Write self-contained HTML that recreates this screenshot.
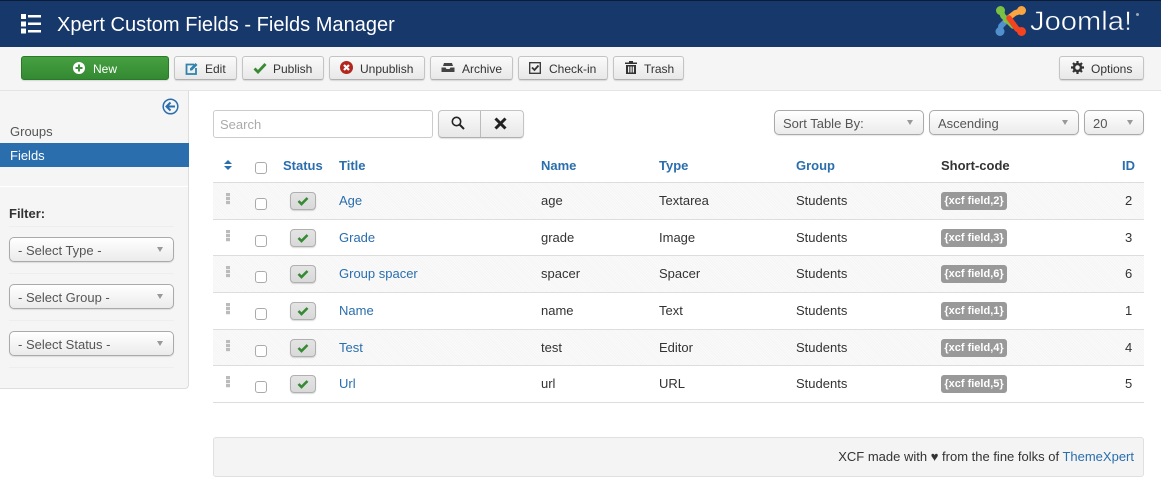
<!DOCTYPE html>
<html><head><meta charset="utf-8"><style>
html,body{margin:0;padding:0;background:#fff}
#p{position:relative;width:1161px;height:500px;overflow:hidden;background:#fff;font:13px/18px "Liberation Sans",sans-serif;color:#333}
#p div,#p span.a,#p a,#p svg{position:absolute}
a{color:#2a6ead;text-decoration:none}
.btn{box-sizing:border-box;top:56px;height:24px;border:1px solid #c4c4c4;border-bottom-color:#b0b0b0;border-radius:3px;background:linear-gradient(#fafafa,#e8e8e8);box-shadow:0 1px 1px rgba(0,0,0,.12);font-size:12px;line-height:24px;color:#333;white-space:nowrap}
.btn span{position:absolute;top:0}
.sel{box-sizing:border-box;height:25px;border:1px solid #aaa;border-radius:5px;background:linear-gradient(#fff,#f6f6f6 45%,#ebebeb);box-shadow:0 1px 1px rgba(0,0,0,.1);color:#555;line-height:24px;white-space:nowrap}
.sel span{position:absolute;left:8px;top:1px}
.sel i{position:absolute;right:10px;top:9px;width:0;height:0;border:3px solid transparent;border-top:5px solid #999;border-bottom:0}
.hl{background:#eee;height:1px;left:9px;width:165px}
.row{left:213px;width:931px;height:36px;border-bottom:1px solid #ddd;box-sizing:content-box}
.odd{background:#f7f7f7 repeating-linear-gradient(45deg,#f5f5f5 0 1px,#fafafa 1px 2px)}
.c{position:absolute;top:9px;white-space:nowrap}
.th{position:absolute;top:157px;font-weight:bold;color:#2a6ead;white-space:nowrap}
.cb{box-sizing:border-box;width:12px;height:12px;border:1px solid #aaa;border-radius:3px;background:#fff;left:42px}
.st{box-sizing:border-box;left:77px;top:9px;width:26px;height:18px;border:1px solid #b0b0b0;border-radius:4px;background:linear-gradient(#e4e4e4,#d9d9d9);box-shadow:0 1px 1px rgba(0,0,0,.15)}
.lab{left:728px;top:9px;height:18px;width:66px;border-radius:3px;background:#999;color:#fff;font-size:11px;font-weight:bold;line-height:18px;text-align:center;white-space:nowrap}
.dr{left:13px;top:10px;width:4px;height:12px;background:repeating-linear-gradient(#bbb 0 3px,#eee 3px 4px)}
</style></head><body><div id="p">

<div style="left:0;top:0;width:1161px;height:47px;background:#17386a;border-top:1px solid #0c1c36;box-sizing:border-box"></div>
<svg style="left:20px;top:13px" width="22" height="21" viewBox="0 0 22 21"><path fill="#fff" d="M1 1h5v5H1zM8 2h13v2.500H8zM1 8.500h5v5H1zM8 9.500h13V12H8zM1 15.500h5v5H1zM8 17h13v2.500H8z"/></svg>
<div style="left:57px;top:12px;font-size:20px;line-height:26px;color:#fff;white-space:nowrap;letter-spacing:.03px">Xpert Custom Fields - Fields Manager</div>

<svg style="left:995px;top:5px" width="32" height="32" viewBox="0 0 32 32" fill="none" stroke-width="5.500" stroke-linecap="round" stroke-linejoin="round">
<path stroke="#5091cd" d="M5 26L6 21L15 12"/>
<path stroke="#f9a541" d="M26 6L20 8L11 15"/>
<path stroke="#7ac143" d="M6 6L8 11L18 21"/>
<path stroke="#f44321" d="M26 26L22 24L14 13"/>
<circle cx="5.500" cy="5.500" r="4.500" fill="#7ac143"/><circle cx="26.500" cy="5.500" r="4.500" fill="#f9a541"/><circle cx="5" cy="26.500" r="4.500" fill="#5091cd"/><circle cx="26.500" cy="26.500" r="4.500" fill="#f44321"/>
</svg>
<div style="left:1030px;top:5px;font-size:27px;line-height:32px;color:#fff;white-space:nowrap;transform:scaleX(1.08);transform-origin:0 0;-webkit-text-stroke:.5px #17386a">Joomla!</div>
<div style="left:1136px;top:13px;width:3px;height:3px;border-radius:50%;background:#9aa6b8"></div>

<div style="left:0;top:47px;width:1161px;height:44px;background:#f5f5f5;border-bottom:1px solid #e4e4e4;box-sizing:border-box"></div>

<div class="btn" style="left:21px;width:148px;background:linear-gradient(#46a041,#348a32);border-color:#2b7a2a;color:#fff"><span style="left:71px">New</span></div>
<svg style="left:73px;top:62px" width="12" height="12" viewBox="0 0 12 12"><circle cx="6" cy="6" r="6" fill="#fff"/><path d="M6 2.500v7M2.500 6h7" stroke="#3c933a" stroke-width="2"/></svg>

<div class="btn" style="left:174px;width:63px"><span style="left:30px">Edit</span></div>
<svg style="left:185px;top:62px" width="13" height="13" viewBox="0 0 13 13" fill="none"><path d="M9 2.500H1.500v9.500h9.500V6" stroke="#2f83ad" stroke-width="1.800"/><path d="M5 6.500L10.500 1l2 2L7 8.500H5z" fill="#2f83ad"/></svg>

<div class="btn" style="left:242px;width:82px"><span style="left:30px">Publish</span></div>
<svg style="left:253px;top:62px" width="14" height="12" viewBox="0 0 14 12" fill="none"><path d="M1.500 6.500L5 10l7.500-8" stroke="#378a33" stroke-width="2.800"/></svg>

<div class="btn" style="left:329px;width:96px"><span style="left:30px">Unpublish</span></div>
<svg style="left:340px;top:61px" width="13" height="13" viewBox="0 0 13 13"><circle cx="6.500" cy="6.500" r="6.500" fill="#b3261e"/><path d="M4 4l5 5M9 4l-5 5" stroke="#fff" stroke-width="2.200"/></svg>

<div class="btn" style="left:430px;width:83px"><span style="left:31px">Archive</span></div>
<svg style="left:441px;top:62px" width="14" height="11" viewBox="0 0 14 11"><path fill="#444" d="M3 1h8l1 3H2zM0.500 5.500h4l1 1.500h3l1-1.500h4V10H.5z"/></svg>

<div class="btn" style="left:518px;width:90px"><span style="left:30px">Check-in</span></div>
<svg style="left:529px;top:62px" width="12" height="12" viewBox="0 0 12 12" fill="none"><rect x=".7" y=".7" width="10.600" height="10.600" stroke="#333" stroke-width="1.300"/><path d="M3 5.500l2.500 2.500L9.500 3.500" stroke="#333" stroke-width="1.800"/></svg>

<div class="btn" style="left:613px;width:71px"><span style="left:30px">Trash</span></div>
<svg style="left:625px;top:61px" width="12" height="13" viewBox="0 0 12 13"><path fill="#333" d="M4 0h4v1.500h4V3H0V1.500h4zM1 4h10v9H1zM3 5.500V11.500h1.300V5.500zM5.400 5.500V11.500h1.300V5.500zM7.700 5.500V11.500H9V5.500z" fill-rule="evenodd"/></svg>

<div class="btn" style="left:1059px;width:85px"><span style="left:31px">Options</span></div>
<svg style="left:1071px;top:61px" width="13" height="13" viewBox="0 0 13 13"><circle cx="6.500" cy="6.500" r="3.500" fill="none" stroke="#333" stroke-width="2.500"/><path d="M6.500 0v13M0 6.500h13M2 2l9 9M11 2l-9 9" stroke="#333" stroke-width="2.200" stroke-dasharray="2.400 8.200 2.400 0"/></svg>

<div style="left:0;top:91px;width:189px;height:298px;box-sizing:border-box;background:#f5f5f5;border-right:1px solid #ddd;border-bottom:1px solid #ddd;border-bottom-right-radius:4px"></div>
<svg style="left:162px;top:98px" width="17" height="17" viewBox="0 0 17 17" fill="none"><circle cx="8.500" cy="8.500" r="7.300" stroke="#2a6ead" stroke-width="1.500"/><path d="M13 8.500H5M8.500 4.500l-4 4 4 4" stroke="#2a6ead" stroke-width="2"/></svg>
<div style="left:10px;top:123px;color:#555">Groups</div>
<div style="left:0;top:143px;width:189px;height:24px;background:#2a6ead"></div>
<div style="left:10px;top:147px;color:#fff">Fields</div>
<div style="left:0;top:186px;width:188px;height:1px;background:#fff"></div>
<div style="left:9px;top:205px;font-weight:bold;color:#333">Filter:</div>
<div class="hl" style="top:226px"></div>
<div class="sel" style="left:9px;top:237px;width:165px"><span>- Select Type -</span><i></i></div>
<div class="hl" style="top:273px"></div>
<div class="sel" style="left:9px;top:284px;width:165px"><span>- Select Group -</span><i></i></div>
<div class="hl" style="top:320px"></div>
<div class="sel" style="left:9px;top:331px;width:165px"><span>- Select Status -</span><i></i></div>
<div class="hl" style="top:367px"></div>

<div style="left:213px;top:110px;width:220px;height:28px;box-sizing:border-box;border:1px solid #ccc;border-radius:3px;background:#fff"></div>
<div style="left:220px;top:116px;color:#aaa">Search</div>
<div class="btn" style="left:438px;top:110px;width:86px;height:28px;border-radius:4px"></div>
<div style="left:480px;top:111px;width:1px;height:26px;background:#bbb"></div>
<svg style="left:451px;top:116px" width="14" height="14" viewBox="0 0 14 14" fill="none" stroke="#222"><circle cx="5.500" cy="5.500" r="4.200" stroke-width="1.600"/><path d="M8.500 8.500l4.500 4.500" stroke-width="2"/></svg>
<svg style="left:494px;top:117px" width="13" height="13" viewBox="0 0 13 13"><path d="M1.500 1.500l10 10M11.500 1.500l-10 10" stroke="#222" stroke-width="3"/></svg>

<div class="sel" style="left:774px;top:110px;width:150px"><span>Sort Table By:</span><i></i></div>
<div class="sel" style="left:929px;top:110px;width:150px"><span>Ascending</span><i></i></div>
<div class="sel" style="left:1084px;top:110px;width:60px"><span>20</span><i></i></div>

<svg style="left:224px;top:160px" width="8" height="10" viewBox="0 0 8 10"><path fill="#2a6ead" d="M4 0l4 4H0zM0 6h8l-4 4z"/></svg>
<div class="cb" style="left:255px;top:162px"></div>
<div class="th" style="left:283px">Status</div>
<div class="th" style="left:339px">Title</div>
<div class="th" style="left:541px">Name</div>
<div class="th" style="left:659px">Type</div>
<div class="th" style="left:796px">Group</div>
<div class="th" style="left:941px;color:#333">Short-code</div>
<div class="th" style="left:1122px">ID</div>
<div style="left:213px;top:182px;width:931px;height:1px;background:#ddd"></div>

<div class="row odd" style="top:183px"><div class="dr"></div><div class="cb" style="top:15px"></div><div class="st"><svg style="left:6px;top:3px" width="12" height="10" viewBox="0 0 12 10" fill="none"><path d="M1.500 5L4.500 8 10.500 2" stroke="#378a33" stroke-width="2.600"/></svg></div><a class="c" style="left:126px">Age</a><span class="c" style="left:328px">age</span><span class="c" style="left:446px">Textarea</span><span class="c" style="left:583px">Students</span><div class="lab">{xcf field,2}</div><span class="c" style="left:912px">2</span></div>

<div class="row" style="top:220px;height:35px"><div class="dr"></div><div class="cb" style="top:15px"></div><div class="st"><svg style="left:6px;top:3px" width="12" height="10" viewBox="0 0 12 10" fill="none"><path d="M1.500 5L4.500 8 10.500 2" stroke="#378a33" stroke-width="2.600"/></svg></div><a class="c" style="left:126px">Grade</a><span class="c" style="left:328px">grade</span><span class="c" style="left:446px">Image</span><span class="c" style="left:583px">Students</span><div class="lab">{xcf field,3}</div><span class="c" style="left:912px">3</span></div>

<div class="row odd" style="top:256px"><div class="dr"></div><div class="cb" style="top:15px"></div><div class="st"><svg style="left:6px;top:3px" width="12" height="10" viewBox="0 0 12 10" fill="none"><path d="M1.500 5L4.500 8 10.500 2" stroke="#378a33" stroke-width="2.600"/></svg></div><a class="c" style="left:126px">Group spacer</a><span class="c" style="left:328px">spacer</span><span class="c" style="left:446px">Spacer</span><span class="c" style="left:583px">Students</span><div class="lab">{xcf field,6}</div><span class="c" style="left:912px">6</span></div>

<div class="row" style="top:293px"><div class="dr"></div><div class="cb" style="top:15px"></div><div class="st"><svg style="left:6px;top:3px" width="12" height="10" viewBox="0 0 12 10" fill="none"><path d="M1.500 5L4.500 8 10.500 2" stroke="#378a33" stroke-width="2.600"/></svg></div><a class="c" style="left:126px">Name</a><span class="c" style="left:328px">name</span><span class="c" style="left:446px">Text</span><span class="c" style="left:583px">Students</span><div class="lab">{xcf field,1}</div><span class="c" style="left:912px">1</span></div>

<div class="row odd" style="top:330px;height:35px"><div class="dr"></div><div class="cb" style="top:15px"></div><div class="st"><svg style="left:6px;top:3px" width="12" height="10" viewBox="0 0 12 10" fill="none"><path d="M1.500 5L4.500 8 10.500 2" stroke="#378a33" stroke-width="2.600"/></svg></div><a class="c" style="left:126px">Test</a><span class="c" style="left:328px">test</span><span class="c" style="left:446px">Editor</span><span class="c" style="left:583px">Students</span><div class="lab">{xcf field,4}</div><span class="c" style="left:912px">4</span></div>

<div class="row" style="top:366px"><div class="dr"></div><div class="cb" style="top:15px"></div><div class="st"><svg style="left:6px;top:3px" width="12" height="10" viewBox="0 0 12 10" fill="none"><path d="M1.500 5L4.500 8 10.500 2" stroke="#378a33" stroke-width="2.600"/></svg></div><a class="c" style="left:126px">Url</a><span class="c" style="left:328px">url</span><span class="c" style="left:446px">URL</span><span class="c" style="left:583px">Students</span><div class="lab">{xcf field,5}</div><span class="c" style="left:912px">5</span></div>

<div style="left:213px;top:437px;width:931px;height:40px;box-sizing:border-box;background:#f4f4f4;border:1px solid #e0e0e0;border-radius:3px"></div>
<div style="right:27px;top:448px;white-space:nowrap">XCF made with ♥ from the fine folks of <a style="position:static">ThemeXpert</a></div>
</div></body></html>
